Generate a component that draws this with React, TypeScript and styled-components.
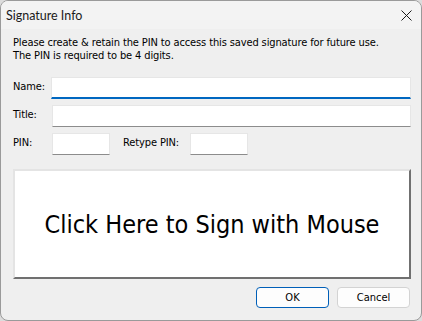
import React from "react";
import styled, { createGlobalStyle } from "styled-components";

const GlobalStyle = createGlobalStyle`
  html, body {
    margin: 0;
    padding: 0;
    background: #dcdcdc;
  }
  * {
    box-sizing: border-box;
  }
`;

const dialogFont = `"DejaVu Sans Condensed", "DejaVu Sans", sans-serif`;

const Window = styled.div`
  width: 422px;
  height: 321px;
  border: 1px solid #9a9a9a;
  border-radius: 8px;
  overflow: hidden;
  background: #efefef;
  display: flex;
  flex-direction: column;
  font-family: ${dialogFont};
  font-size: 11px;
  letter-spacing: -0.12px;
  color: #000;
`;

const TitleBar = styled.div`
  height: 28px;
  flex-shrink: 0;
  background: #f3f3f3;
  display: flex;
  align-items: center;
  justify-content: space-between;
  padding: 0 9px 0 5px;
`;

const TitleText = styled.span`
  font-family: Lato, "Liberation Sans", sans-serif;
  font-size: 12.5px;
  letter-spacing: 0;
  color: #1a1a1a;
  margin-top: 1px;
`;

const CloseButton = styled.button`
  width: 12px;
  height: 12px;
  padding: 0;
  border: none;
  background: transparent;
  display: flex;
  align-items: center;
  justify-content: center;
`;

const Body = styled.div`
  flex: 1;
  display: flex;
  flex-direction: column;
  padding: 7px 10px 13px 11px;
`;

const Intro = styled.p`
  margin: 0 0 15px 1px;
  line-height: 13px;
`;

const Row = styled.div`
  display: flex;
  align-items: center;
  margin-bottom: 6px;
`;

const Label = styled.label<{ width?: number }>`
  width: ${({ width }) => width ?? 40}px;
  flex-shrink: 0;
  padding-left: 1px;
  margin-top: -3px;
`;

const TextInput = styled.input<{ focused?: boolean; narrow?: boolean }>`
  height: 22px;
  ${({ narrow }) => (narrow ? "width: 58px;" : "flex: 1;")}
  background: #fff;
  border: 1px solid #e6e6e6;
  border-bottom: ${({ focused }) =>
    focused ? "2px solid #0067c0" : "1px solid #8c8c8c"};
  border-radius: 0;
  outline: none;
  font-family: ${dialogFont};
  font-size: 11px;
  padding: 0 4px;
`;

const Spacer = styled.div<{ size: number }>`
  width: ${({ size }) => size}px;
  flex-shrink: 0;
`;

const SignPad = styled.button`
  margin-top: 8px;
  margin-left: 1px;
  height: 110px;
  background: #fff;
  border-style: solid;
  border-width: 2px;
  border-color: #e4e4e4 #707070 #707070 #e4e4e4;
  font-family: ${dialogFont};
  font-size: 25px;
  letter-spacing: 0;
  color: #000;
  cursor: pointer;
`;

const ButtonRow = styled.div`
  display: flex;
  justify-content: flex-end;
  gap: 8px;
  margin-top: 8px;
  padding-right: 1px;
`;

const DialogButton = styled.button<{ primary?: boolean }>`
  width: 73px;
  height: 21px;
  background: #fdfdfd;
  border: 1px solid ${({ primary }) => (primary ? "#005fb8" : "#d3d3d3")};
  border-radius: 4px;
  font-family: ${dialogFont};
  font-size: 11px;
  color: #000;
  padding: 0;
`;

export default function App() {
  return (
    <>
      <GlobalStyle />
      <Window>
        <TitleBar>
          <TitleText>Signature Info</TitleText>
          <CloseButton aria-label="Close">
            <svg width="11" height="11" viewBox="0 0 11 11">
              <path d="M0.5 0.5 L10.5 10.5 M10.5 0.5 L0.5 10.5" stroke="#1a1a1a" strokeWidth="1" />
            </svg>
          </CloseButton>
        </TitleBar>
        <Body>
          <Intro>
            Please create &amp; retain the PIN to access this saved signature for future use.
            <br />
            The PIN is required to be 4 digits.
          </Intro>
          <Row>
            <Label width={39}>Name:</Label>
            <TextInput focused />
          </Row>
          <Row>
            <Label>Title:</Label>
            <TextInput />
          </Row>
          <Row>
            <Label>PIN:</Label>
            <TextInput narrow />
            <Spacer size={12} />
            <Label width={68}>Retype PIN:</Label>
            <TextInput narrow />
          </Row>
          <SignPad>Click Here to Sign with Mouse</SignPad>
          <ButtonRow>
            <DialogButton primary>OK</DialogButton>
            <DialogButton>Cancel</DialogButton>
          </ButtonRow>
        </Body>
      </Window>
    </>
  );
}
